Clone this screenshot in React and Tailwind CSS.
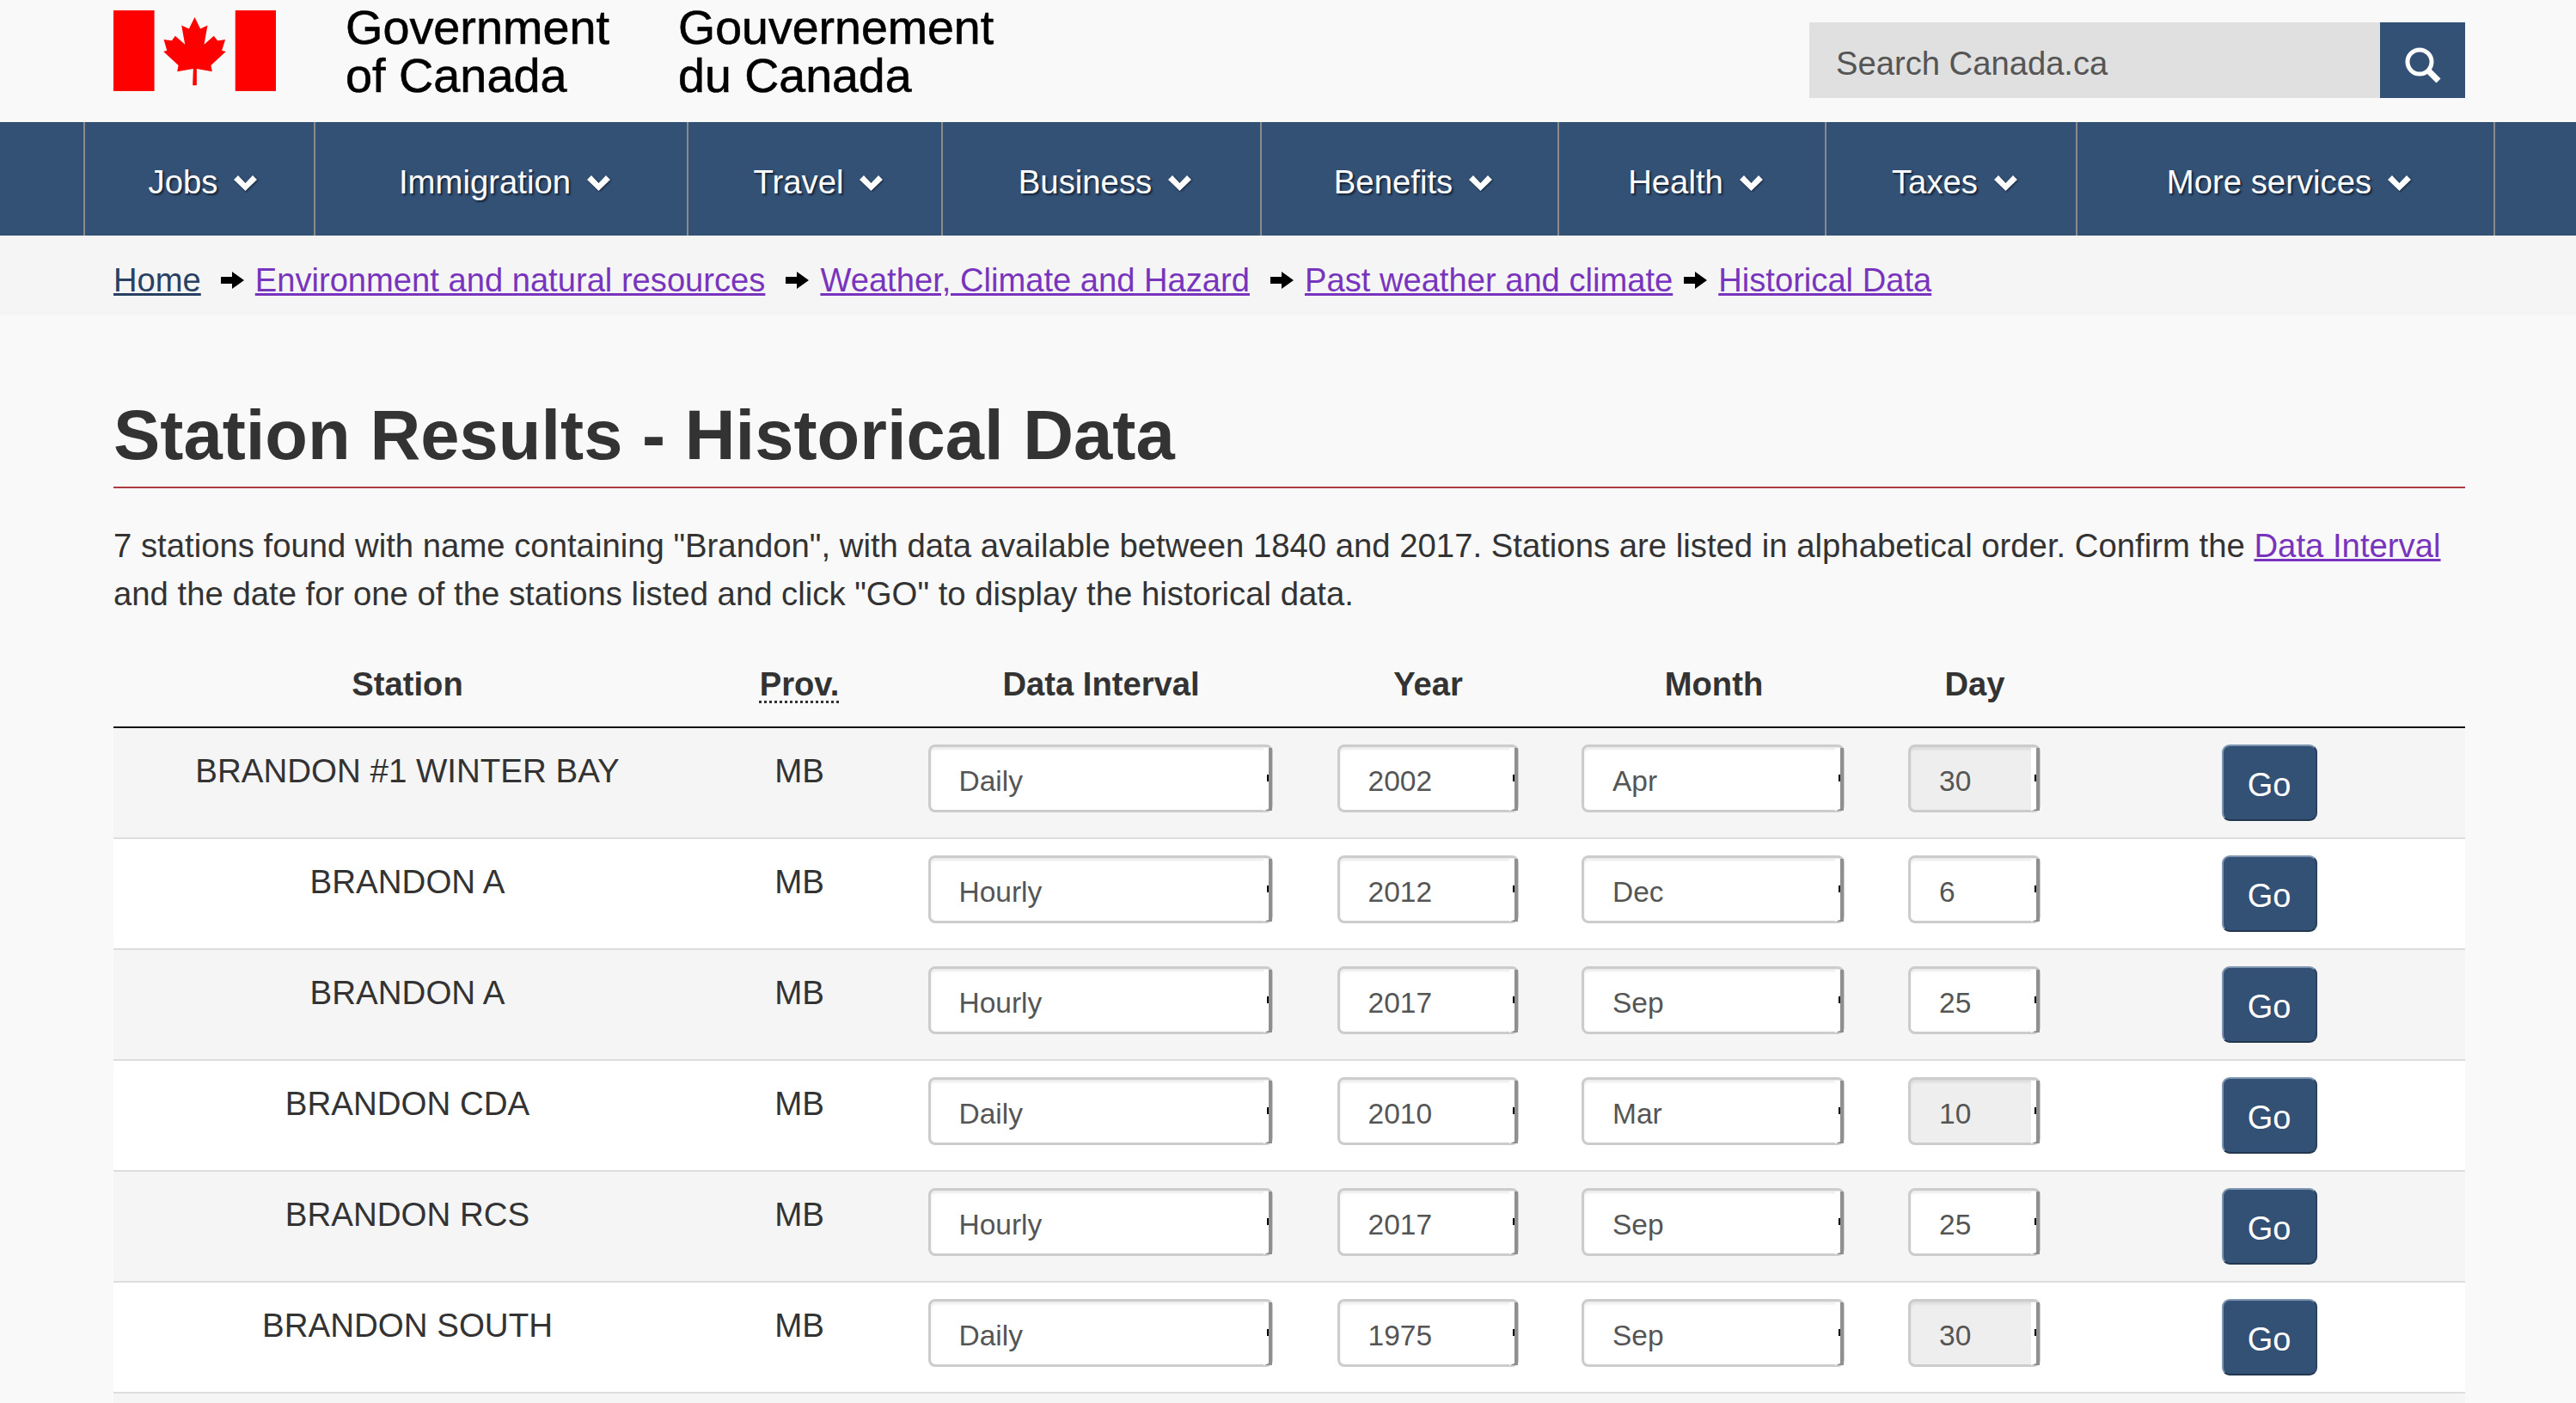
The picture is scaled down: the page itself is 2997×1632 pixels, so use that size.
import React from "react";

const NAV = [
  ["Jobs", "w-[268px]"],
  ["Immigration", "w-[434px]"],
  ["Travel", "w-[296px]"],
  ["Business", "w-[371px]"],
  ["Benefits", "w-[346px]"],
  ["Health", "w-[311px]"],
  ["Taxes", "w-[292px]"],
  ["More services", "w-[488px]"],
];

const CRUMBS = [
  ["Environment and natural resources", "ml-[23px]"],
  ["Weather, Climate and Hazard", "ml-[24px]"],
  ["Past weather and climate", "ml-[24px]"],
  ["Historical Data", "ml-[13px]"],
];

const ROWS = [
  ["BRANDON #1 WINTER BAY", "Daily", "2002", "Apr", "30"],
  ["BRANDON A", "Hourly", "2012", "Dec", "6"],
  ["BRANDON A", "Hourly", "2017", "Sep", "25"],
  ["BRANDON CDA", "Daily", "2010", "Mar", "10"],
  ["BRANDON RCS", "Hourly", "2017", "Sep", "25"],
  ["BRANDON SOUTH", "Daily", "1975", "Sep", "30"],
];

const Flag = () => (
  <svg viewBox="96 36 568 282" className="w-[189px] h-[94px] shrink-0">
    <rect x="96" y="36" width="143" height="282" fill="#ff0000" />
    <rect x="522" y="36" width="142" height="282" fill="#ff0000" />
    <path
      fill="#ff0000"
      d="M380 60 L400 100 L425 88 L413 155 L447 125 L460 142 L487 138 L475 176 L489 180 L437 228 L441 250 L387 240 L387 298 L373 298 L375 240 L319 250 L323 228 L271 180 L283 176 L272 138 L300 142 L312 125 L346 155 L334 88 L360 100 Z"
    />
  </svg>
);

const Chevron = () => (
  <svg viewBox="0 0 27 18" className="w-[27px] h-[18px] ml-[19px] mt-[2px] [filter:drop-shadow(1px_1px_1px_#16263a)]">
    <path d="M0 5 L5 0 L13.5 9 L22 0 L27 5 L13.5 18 Z" fill="#fff" />
  </svg>
);

const Arrow = ({ gap }) => (
  <svg viewBox="0 0 27 20" className={`w-[27px] h-[20px] mr-[13px] mt-[2px] ${gap}`}>
    <path d="M0 6 H13 V0 L27 10 L13 20 V14 H0 Z" fill="#000" />
  </svg>
);

// native select look, the arrow is cut off on the right in the picture
const Select = ({ value, width, off }) => (
  <div
    className={`relative h-[79px] mx-auto border-[3px] border-[#ccc] rounded-[8px] shadow-[inset_0_3px_3px_rgba(0,0,0,0.08)] flex items-center pl-[33px] pt-[8px] text-[33.5px] text-[#555] text-left ${width} ${
      off ? "bg-[#eee]" : "bg-white"
    }`}
  >
    {value}
    <div className="absolute -right-[2px] top-[1px] -bottom-[1px] w-[10px] bg-white border-r-[4px] border-[#8f8f8f]">
      <div className="absolute right-0 top-[31px] w-[2px] h-[8px] bg-black" />
    </div>
    <div className="absolute -right-[2px] -bottom-[1px] w-0 h-0 border-l-[9px] border-b-[4px] border-l-transparent border-b-[#8f8f8f]" />
  </div>
);

export default function App() {
  return (
    <div className="h-[1632px] overflow-hidden bg-[#f9f9f9] font-['Liberation_Sans',Arial,sans-serif] text-[#333]">
      <header className="h-[142px] flex items-start justify-between pl-[132px] pr-[129px]">
        <div className="flex items-start pt-[12px]">
          <Flag />
          <div className="ml-[81px] -mt-[8px] text-[55.8px] leading-[56px] text-black [-webkit-text-stroke:0.6px_#000]">
            Government
            <br />
            of Canada
          </div>
          <div className="ml-[80px] -mt-[8px] text-[55.5px] leading-[56px] text-black [-webkit-text-stroke:0.6px_#000]">
            Gouvernement
            <br />
            du Canada
          </div>
        </div>
        <div className="flex mt-[26px] h-[88px]">
          <div className="w-[664px] bg-[#e0e0e0] flex items-center pl-[31px] pt-[8px] text-[38.2px] text-[#555]">
            Search Canada.ca
          </div>
          <button className="w-[99px] bg-[#335075] flex items-center justify-center pt-[12px]">
            <svg viewBox="0 0 42 42" className="w-[42px] h-[42px]">
              <circle cx="17" cy="17" r="14" fill="none" stroke="#fff" strokeWidth="5" />
              <path d="M28 28 L39 39" stroke="#fff" strokeWidth="7" />
            </svg>
          </button>
        </div>
      </header>

      <nav className="h-[132px] bg-[#335075] flex pl-[97px]">
        {NAV.map(([label, width], i) => (
          <div
            key={label}
            className={`flex items-center justify-center pt-[8px] pl-[8px] border-l-2 border-[#8a8a8a] text-[38.3px] text-white [text-shadow:2px_2px_2px_#16263a] ${width} ${
              i === NAV.length - 1 ? "border-r-2" : ""
            }`}
          >
            {label}
            <Chevron />
          </div>
        ))}
      </nav>

      <div className="h-[93px] bg-[#f5f5f5] flex items-center pl-[132px] pr-[129px] pt-[10px] text-[38.15px] text-[#7834bc]">
        <a className="underline text-[#284162]">Home</a>
        {CRUMBS.map(([c, gap]) => (
          <span key={c} className="flex items-center">
            <Arrow gap={gap} />
            <a className="underline">{c}</a>
          </span>
        ))}
      </div>

      <main className="pl-[132px] pr-[129px]">
        <h1 className="mt-[93px] text-[81.4px] leading-[92px] font-bold pb-[14px] border-b-2 border-[#af3c43]">
          Station Results - Historical Data
        </h1>
        <p className="mt-[39px] text-[38.3px] leading-[56px]">
          7 stations found with name containing "Brandon", with data available between 1840 and 2017. Stations are listed in alphabetical order. Confirm the{" "}
          <a className="underline text-[#7834bc]">Data Interval</a> and the date for one of the stations listed and click "GO" to display the historical data.
        </p>

        <table className="mt-[32px] w-full table-fixed border-collapse text-center text-[38.5px]">
          <colgroup>
            <col className="w-[684px]" />
            <col className="w-[226px]" />
            <col className="w-[476px]" />
            <col className="w-[286px]" />
            <col className="w-[378px]" />
            <col className="w-[230px]" />
            <col />
          </colgroup>
          <thead>
            <tr className="h-[95px] border-b-2 border-[#111] text-[38.2px]">
              <th className="pb-[4px]">Station</th>
              <th className="pb-[4px] pl-[2px]">
                <span className="underline decoration-dotted decoration-[3px] underline-offset-[6px]">Prov.</span>
              </th>
              <th className="pb-[4px] pl-[2px]">Data Interval</th>
              <th className="pb-[4px] pl-[1px]">Year</th>
              <th className="pb-[4px] pl-[2px]">Month</th>
              <th className="pb-[4px] pl-[1px]">Day</th>
              <th></th>
            </tr>
          </thead>
          <tbody>
            {ROWS.map(([name, interval, year, month, day], i) => (
              <tr key={i} className={`border-b-2 border-[#ddd] ${i % 2 === 0 ? "bg-[#f5f5f5]" : "bg-white"}`}>
                <td className="align-top pt-[21px]">{name}</td>
                <td className="align-top pt-[21px] pl-[2px]">MB</td>
                <td className="align-top py-[19px]">
                  <Select value={interval} width="w-[401px]" />
                </td>
                <td className="align-top py-[19px]">
                  <Select value={year} width="w-[211px]" />
                </td>
                <td className="align-top py-[19px]">
                  <Select value={month} width="w-[306px]" />
                </td>
                <td className="align-top py-[19px]">
                  <Select value={day} width="w-[154px]" off={interval === "Daily"} />
                </td>
                <td className="align-top py-[19px]">
                  <button className="w-[111px] h-[89px] mx-auto block bg-[#335075] text-white text-[38px] pt-[6px] rounded-[9px] border-[2px] border-t-[#8096b0] border-l-[#8096b0] border-r-[#2a4261] border-b-[#23384f]">
                    Go
                  </button>
                </td>
              </tr>
            ))}
            <tr className="bg-[#f5f5f5]">
              <td colSpan={7} className="h-[127px]"></td>
            </tr>
          </tbody>
        </table>
      </main>
    </div>
  );
}
